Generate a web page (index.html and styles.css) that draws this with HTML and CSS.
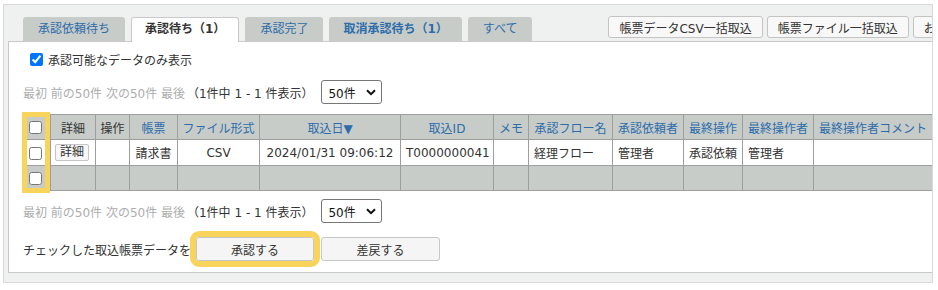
FILE: index.html
```html
<!DOCTYPE html>
<html lang="ja">
<head>
<meta charset="utf-8">
<link rel="stylesheet" href="styles.css">
</head>
<body>
<div class="frame">
  <div class="head">
    <div class="tabs">
      <span class="tab">承認依頼待ち</span>
      <span class="tab active">承認待ち（1）</span>
      <span class="tab">承認完了</span>
      <span class="tab bold">取消承認待ち（1）</span>
      <span class="tab">すべて</span>
    </div>
    <div class="tools">
      <button class="tool">帳票データCSV一括取込</button>
      <button class="tool">帳票ファイル一括取込</button>
      <button class="tool">お知らせ</button>
    </div>
  </div>
  <div class="panel">
    <label class="only"><input type="checkbox" class="chk" checked><span>承認可能なデータのみ表示</span></label>
    <div class="pager">
      <span class="nav">最初 前の50件 次の50件 最後</span>
      <span class="count">（1件中 1 - 1 件表示）</span>
      <span class="select"><span>50件</span><svg width="10" height="7" viewBox="0 0 10 7"><polyline points="1,1.2 5,5.2 9,1.2" fill="none" stroke="#111" stroke-width="2"/></svg></span>
    </div>
    <div class="table-wrap">
      <table class="grid">
        <colgroup>
          <col style="width:28px"><col style="width:45px"><col style="width:34px"><col style="width:48px"><col style="width:82px"><col style="width:141px"><col style="width:93px"><col style="width:35px"><col style="width:84px"><col style="width:71px"><col style="width:59px"><col style="width:71px"><col style="width:119px">
        </colgroup>
        <thead>
          <tr class="hrow">
            <th><input type="checkbox" class="chk"></th>
            <th>詳細</th>
            <th>操作</th>
            <th class="link">帳票</th>
            <th class="link">ファイル形式</th>
            <th class="link">取込日▼</th>
            <th class="link">取込ID</th>
            <th class="link">メモ</th>
            <th class="link">承認フロー名</th>
            <th class="link">承認依頼者</th>
            <th class="link">最終操作</th>
            <th class="link">最終操作者</th>
            <th class="link">最終操作者コメント</th>
          </tr>
        </thead>
        <tbody>
          <tr class="drow">
            <td><input type="checkbox" class="chk"></td>
            <td><button class="mini">詳細</button></td>
            <td></td>
            <td class="c">請求書</td>
            <td class="c">CSV</td>
            <td class="c">2024/01/31 09:06:12</td>
            <td>T0000000041</td>
            <td></td>
            <td>経理フロー</td>
            <td>管理者</td>
            <td>承認依頼</td>
            <td>管理者</td>
            <td></td>
          </tr>
          <tr class="frow">
            <td><input type="checkbox" class="chk"></td>
            <td></td><td></td><td></td><td></td><td></td><td></td><td></td><td></td><td></td><td></td><td></td><td></td>
          </tr>
        </tbody>
      </table>
      <div class="mark"></div>
    </div>
    <div class="pager second">
      <span class="nav">最初 前の50件 次の50件 最後</span>
      <span class="count">（1件中 1 - 1 件表示）</span>
      <span class="select"><span>50件</span><svg width="10" height="7" viewBox="0 0 10 7"><polyline points="1,1.2 5,5.2 9,1.2" fill="none" stroke="#111" stroke-width="2"/></svg></span>
    </div>
    <div class="actions">
      <span class="lead">チェックした取込帳票データを</span>
      <button class="act approve">承認する</button>
      <button class="act">差戻する</button>
    </div>
  </div>
</div>
</body>
</html>
```

FILE: styles.css
```css
* { box-sizing: border-box; }
body {
  margin: 0;
  background: #fff;
  font-family: "DejaVu Sans", "Noto Sans CJK JP", sans-serif;
  font-size: 12px;
  color: #333;
}
.frame {
  margin: 4px 0 0 3px;
  width: 930px;
  height: 279px;
  border: 1px solid #d9d9d9;
  background: #eff1f0;
  overflow: hidden;
}
.head {
  display: flex;
  height: 36px;
  padding-left: 19px;
}
.tabs {
  display: flex;
  gap: 6px;
  align-items: flex-start;
  flex-shrink: 0;
}
.tab {
  margin-top: 12px;
  height: 24px;
  line-height: 24px;
  padding: 0 15px;
  background: #c8ccc9;
  color: #2d6ca9;
  border-radius: 3px 3px 0 0;
  white-space: nowrap;
}
.tab.bold { font-weight: bold; padding: 0 14px; }
.tab.active {
  position: relative;
  z-index: 2;
  height: 25px;
  line-height: 23px;
  padding: 0 13px;
  background: #fff;
  border: 1px solid #c9c9c9;
  border-bottom: none;
  color: #333;
  font-weight: bold;
}
.tools {
  display: flex;
  gap: 4px;
  margin-left: 76px;
  flex-shrink: 0;
}
.tool {
  margin-top: 11px;
  height: 22px;
  padding: 0 10px;
  border: 1px solid #c4c4c4;
  border-radius: 3px;
  background: #f8f8f8;
  font: inherit;
  color: #333;
  white-space: nowrap;
  flex-shrink: 0;
}
.panel {
  margin-left: 4px;
  width: 940px;
  height: 232px;
  border: 1px solid #c9c9c9;
  background: #fff;
  padding: 11px 0 0 14px;
}
.only {
  display: flex;
  align-items: center;
  height: 13px;
  gap: 5px;
}
.chk {
  margin: 0;
  width: 13px;
  height: 13px;
}
.only .chk { margin-left: 7px; }
.pager {
  display: flex;
  align-items: center;
  height: 24px;
  margin-top: 14px;
  white-space: nowrap;
}
.pager.second { margin-top: 8px; }
.nav { color: #adadad; }
.count { margin-left: 2px; }
.select {
  margin-left: 8px;
  width: 61px;
  height: 24px;
  border: 1px solid #767676;
  border-radius: 3px;
  display: flex;
  align-items: center;
  justify-content: space-between;
  padding: 0 5px 0 6px;
  color: #111;
}
.table-wrap {
  position: relative;
  margin-top: 10px;
  margin-left: -1px;
  width: 910px;
}
.grid {
  border-collapse: collapse;
  table-layout: fixed;
  width: 910px;
}
.grid th, .grid td {
  border: 1px solid #9e9e9e;
  padding: 0 5px;
  white-space: nowrap;
  overflow: hidden;
  text-align: left;
}
.grid th {
  background: #c8ccc9;
  font-weight: normal;
  text-align: center;
  padding: 0;
}
.grid th.link { color: #2d6ca9; }
.grid td.c { text-align: center; padding: 0; }
.grid th:first-child, .grid td:first-child { padding: 0 0 0 6px; text-align: left; }
.grid .chk { vertical-align: middle; }
.hrow th { height: 25px; }
.drow td { height: 26px; }
.frow td { height: 25px; background: #c8ccc9; }
.mini {
  height: 17px;
  width: 34px;
  padding: 0;
  border: 1px solid #c4c4c4;
  border-radius: 2px;
  background: #f6f6f6;
  font: inherit;
  color: #333;
  line-height: 15px;
  margin-left: -1px;
  vertical-align: middle;
}
.mark {
  position: absolute;
  left: 0;
  top: -2px;
  width: 28px;
  height: 81px;
  border: 5px solid #f8d45c;
  pointer-events: none;
}
.actions {
  display: flex;
  align-items: center;
  margin-top: 14px;
  height: 24px;
  white-space: nowrap;
}
.act {
  width: 119px;
  height: 24px;
  border: 1px solid #c6c6c6;
  border-radius: 3px;
  background: #f4f5f4;
  font: inherit;
  color: #333;
  margin-left: 7px;
}
.act.approve {
  width: 118px;
  margin-left: 5px;
  outline: 6px solid #f8d45c;
}
```
